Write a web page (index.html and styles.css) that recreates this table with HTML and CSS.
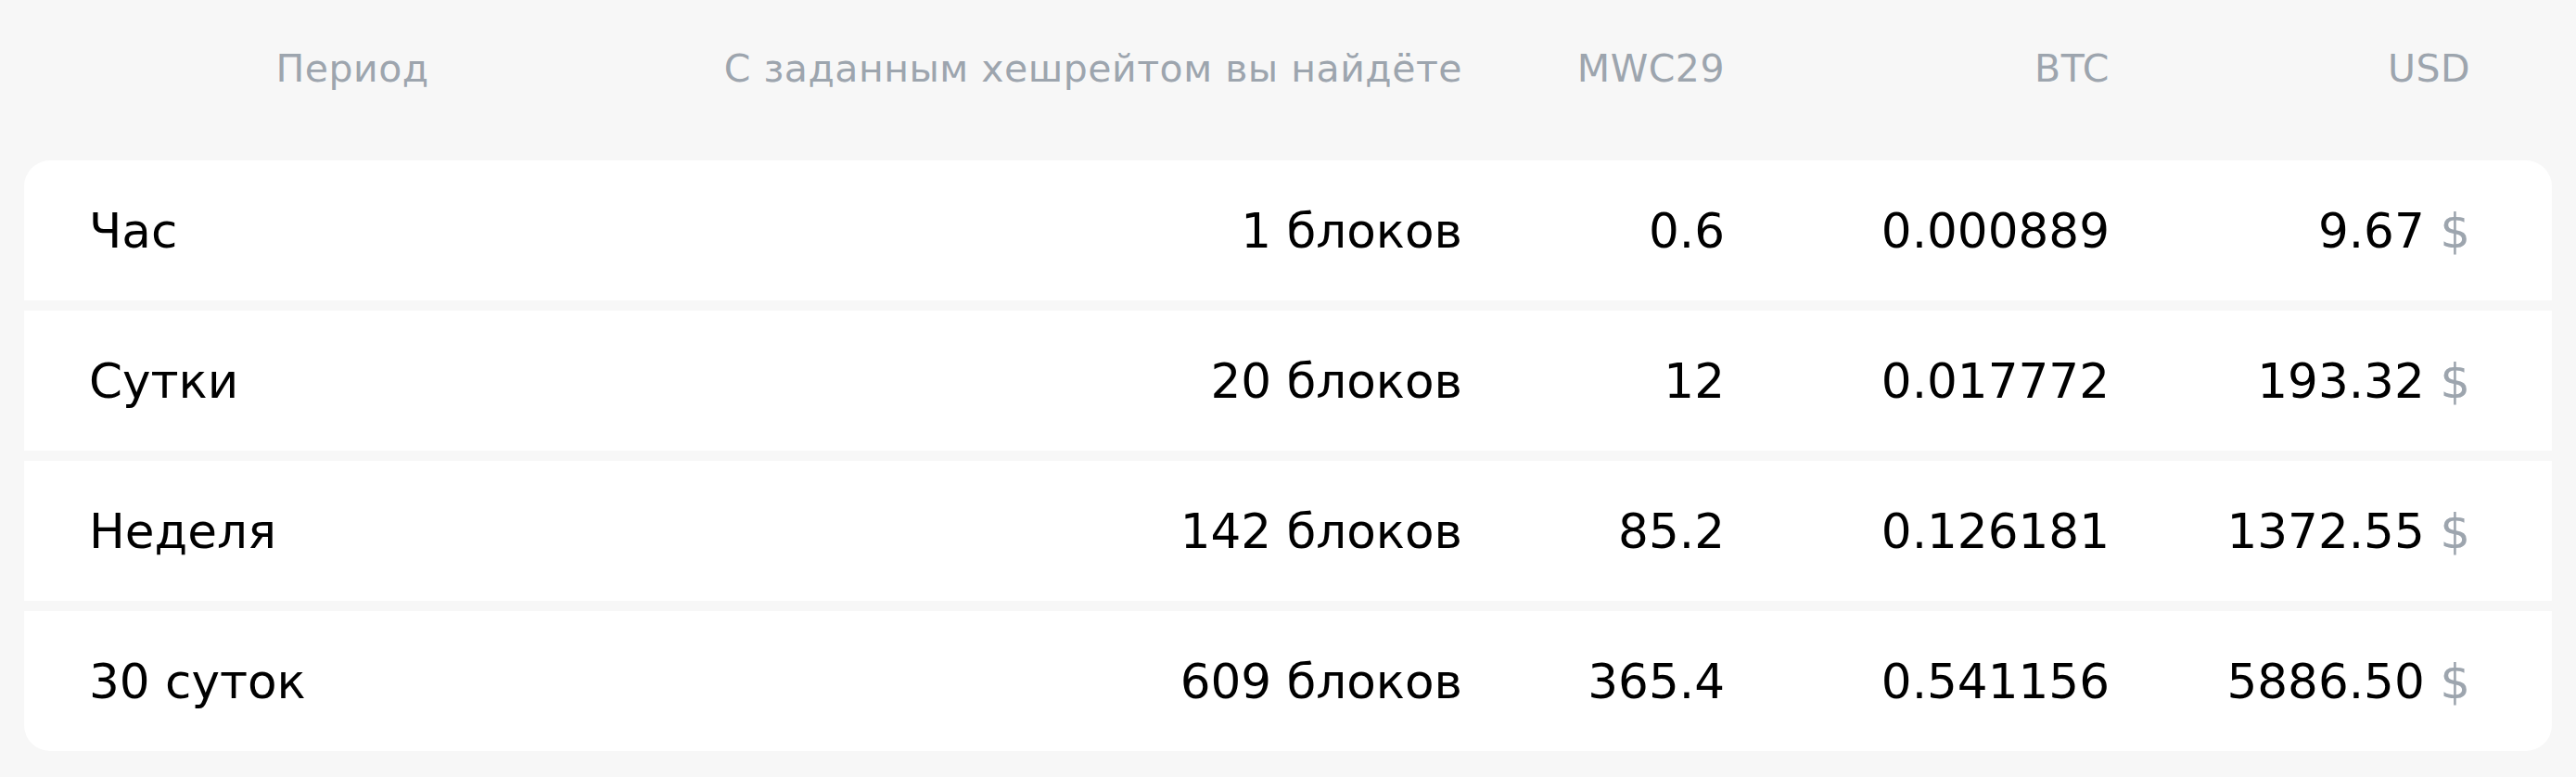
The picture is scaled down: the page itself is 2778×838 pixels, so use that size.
FILE: index.html
```html
<!DOCTYPE html>
<html>
  <head>
    <title>Доходность</title>
    <link rel="stylesheet" href="styles.css">
  </head>
  <body>
    <div id="profit-table">
      <!-- Header -->
      <div class="row head">
        <div class="cell period">Период</div>
        <div class="cell">С заданным хешрейтом вы найдёте</div>
        <div class="cell">MWC29</div>
        <div class="cell">BTC</div>
        <div class="cell">USD</div>
      </div>

      <!-- Rows -->
      <div id="rows">
        <div class="row item">
          <div class="cell period">Час</div>
          <div class="cell">1 блоков</div>
          <div class="cell">0.6</div>
          <div class="cell">0.000889</div>
          <div class="cell">9.67 <span class="cur">$</span></div>
        </div>
        <div class="row item">
          <div class="cell period">Сутки</div>
          <div class="cell">20 блоков</div>
          <div class="cell">12</div>
          <div class="cell">0.017772</div>
          <div class="cell">193.32 <span class="cur">$</span></div>
        </div>
        <div class="row item">
          <div class="cell period">Неделя</div>
          <div class="cell">142 блоков</div>
          <div class="cell">85.2</div>
          <div class="cell">0.126181</div>
          <div class="cell">1372.55 <span class="cur">$</span></div>
        </div>
        <div class="row item">
          <div class="cell period">30 суток</div>
          <div class="cell">609 блоков</div>
          <div class="cell">365.4</div>
          <div class="cell">0.541156</div>
          <div class="cell">5886.50 <span class="cur">$</span></div>
        </div>
      </div>
    </div>
  </body>
</html>
```

FILE: styles.css
```css
body {
  font-family: "DejaVu Sans", sans-serif;
  background-color: #f7f7f7;
  margin: 0;
  padding: 0 26px;
}

#profit-table {
  width: 100%;
}

/* Shared grid for header and rows */
.row {
  display: grid;
  grid-template-columns: 568px 913px 283px 415px 389px;
  align-items: center;
  padding: 0 88px 0 70px;
}

.cell {
  text-align: right;
  white-space: nowrap;
}

/* Header */
.row.head {
  height: 148px;
  margin-bottom: 25px;
  color: #9da5ae;
  font-size: 41px;
  letter-spacing: 0.5px;
}

.row.head .period {
  text-align: center;
}

/* Body rows */
#rows {
  display: flex;
  flex-direction: column;
  gap: 11px;
  border-radius: 28px;
  overflow: hidden;
}

.row.item {
  height: 151px;
  background-color: #fff;
  color: #000;
  font-size: 51.6px;
}

.row.item .period {
  text-align: left;
}

.cur {
  color: #9da5ae;
}
```
